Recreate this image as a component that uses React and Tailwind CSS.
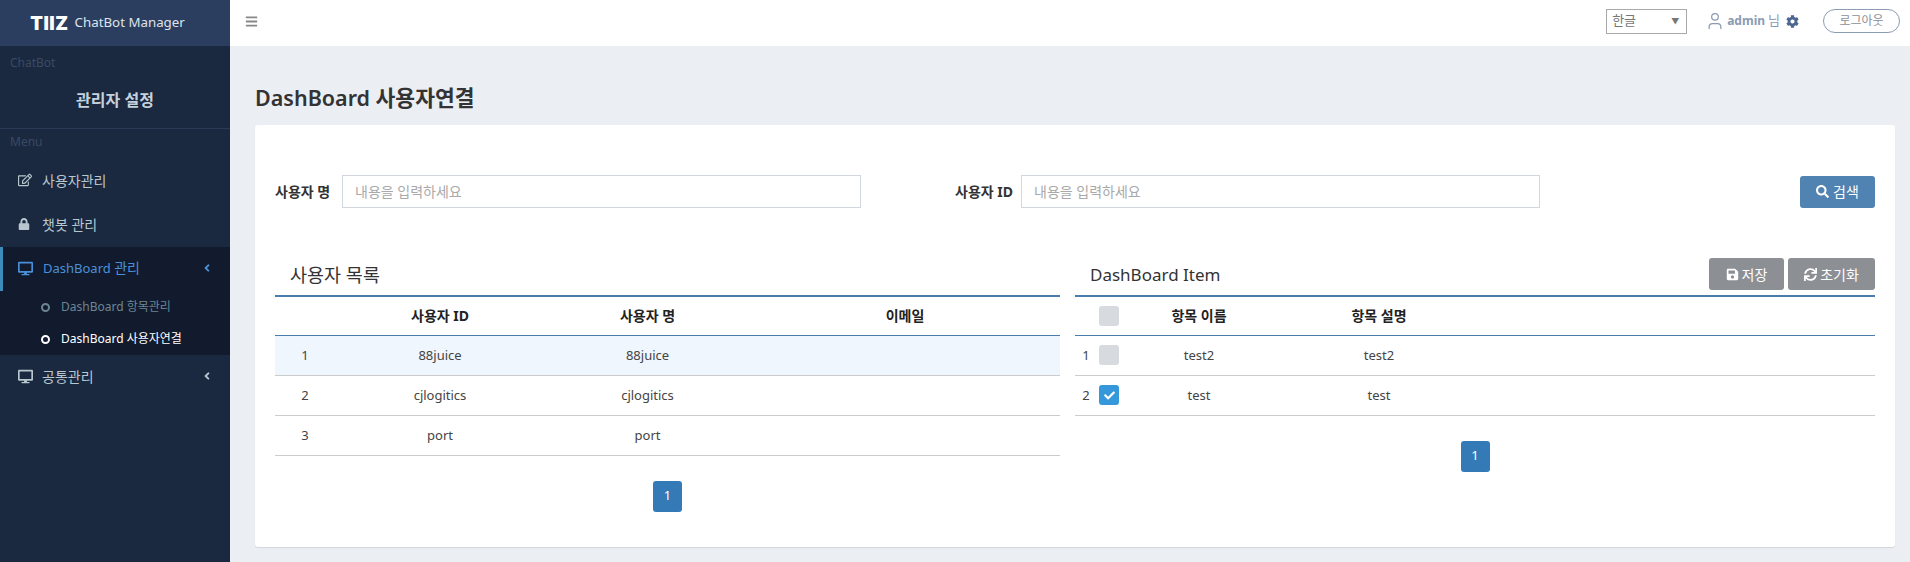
import { FaRegEdit, FaLock, FaDesktop, FaAngleLeft, FaBars, FaCog, FaSearch, FaSave, FaSync, FaCheck } from 'react-icons/fa'
import { User } from 'lucide-react'

const USERS = [
  { id: '88juice', name: '88juice' },
  { id: 'cjlogitics', name: 'cjlogitics' },
  { id: 'port', name: 'port' },
]

const ITEMS = [
  { name: 'test2', desc: 'test2', checked: false },
  { name: 'test', desc: 'test', checked: true },
]

function Sidebar() {
  return (
    <aside className="w-[230px] shrink-0 bg-[#1a2840] text-[14px] text-[#b8c7ce]">
      <div className="h-[46px] bg-[#2b3e60] flex items-center justify-center gap-[6px] text-white pr-[15px]">
        <span className="text-[18.5px] font-black leading-none tracking-[0.5px] font-['Inter']">TIIZ</span>
        <span className="text-[13.3px] text-[#dfe4ec]">ChatBot Manager</span>
      </div>
      <div className="h-[83px] border-b border-[#2b3b57] px-[10px]">
        <div className="pt-[8px] text-[12px] leading-[18px] text-[#3a4a63]">ChatBot</div>
        <div className="mt-[17px] text-center text-[16px] font-bold leading-[22px] text-[#c5d1dc]">관리자 설정</div>
      </div>
      <div className="px-[10px] pt-[4px] text-[12px] leading-[18px] text-[#3a4a63]">Menu</div>
      <nav className="mt-[8px]">
        <MenuItem icon={<FaRegEdit className="text-[14px]" />} label="사용자관리" />
        <MenuItem icon={<FaLock className="text-[12px]" />} label="챗봇 관리" />
        <div className="bg-[#121b2d]">
          <div className="h-[44px] flex items-center pl-[15px] pr-[17px] pb-[2px] border-l-[3px] border-[#3c8dbc] text-[#4a90d9]">
            <span className="w-[25px] flex"><FaDesktop className="text-[15px]" /></span>
            <span className="flex-1 text-[13px]">DashBoard <span className="text-[14px]">관리</span></span>
            <FaAngleLeft className="text-[12px]" />
          </div>
          <div className="text-[12px]">
            <SubItem label="DashBoard 항목관리" className="text-[#6d8593]" />
            <SubItem label="DashBoard 사용자연결" className="text-white" />
          </div>
        </div>
        <MenuItem
          icon={<FaDesktop className="text-[15px]" />}
          label="공통관리"
          right={<FaAngleLeft className="text-[12px]" />}
        />
      </nav>
    </aside>
  )
}

function MenuItem({ icon, label, right }) {
  return (
    <div className="h-[44px] flex items-center pl-[18px] pr-[17px] pb-[2px]">
      <span className="w-[24px] flex">{icon}</span>
      <span className="flex-1">{label}</span>
      {right}
    </div>
  )
}

function SubItem({ label, className }) {
  return (
    <div className={`h-[32px] flex items-center pl-[41px] ${className}`}>
      <span className="w-[9px] h-[9px] rounded-full border-2 border-current mr-[11px]"></span>
      <span>{label}</span>
    </div>
  )
}

function Topbar() {
  return (
    <header className="h-[46px] shrink-0 bg-white flex items-center pl-[15px] pr-[10px] pb-[4px] text-[13px]">
      <FaBars className="text-[13px] text-[#888]" />
      <div className="ml-auto w-[81px] h-[25px] border border-[#a9a9a9] flex items-center justify-between pl-[5px] pr-[7px] text-[#777]">
        <span>한글</span>
        <span className="text-[8px] text-[#777]">▼</span>
      </div>
      <User className="ml-[18px] w-[20px] h-[20px] text-[#8b9bb4]" strokeWidth={1.5} />
      <span className="ml-[2px] text-[12px] font-bold text-[#8b9bb4]">admin</span>
      <span className="ml-[3px] text-[#8b9bb4]">님</span>
      <FaCog className="ml-[6px] text-[13px] text-[#4e6690]" />
      <div className="ml-[24px] w-[77px] h-[24px] rounded-full border border-[#8b9bb4] flex items-center justify-center text-[12px] text-[#8b8f97]">
        로그아웃
      </div>
    </header>
  )
}

function SearchField({ label, className }) {
  return (
    <div className={`flex items-center ${className}`}>
      <span className="text-[14px] font-bold text-[#333] whitespace-nowrap">{label}</span>
      <input
        placeholder="내용을 입력하세요"
        className="ml-auto w-[519px] h-[33px] border border-[#d2d6de] px-[12px] text-[14px] placeholder:text-[#a9a9a9] outline-none"
      />
    </div>
  )
}

function Pager() {
  return (
    <div className="flex justify-center mt-[25px]">
      <div className="w-[29px] h-[31px] rounded-[3px] bg-[#337ab7] text-white text-[13px] flex items-center justify-center">1</div>
    </div>
  )
}

function ActionButton({ icon, label, className }) {
  return (
    <button className={`h-[32px] rounded-[3px] bg-[#8c9095] text-white text-[14px] flex items-center justify-center gap-[3px] ${className}`}>
      {icon}
      {label}
    </button>
  )
}

function UserTable() {
  return (
    <div className="w-[785px]">
      <div className="h-[40px] flex items-center pl-[15px] text-[18.5px] text-[#333]">사용자 목록</div>
      <table className="w-full table-fixed border-t-2 border-[#4a7cac] text-[13px] text-[#444]">
        <colgroup>
          <col className="w-[60px]" />
          <col className="w-[210px]" />
          <col className="w-[205px]" />
          <col />
        </colgroup>
        <thead>
          <tr className="h-[39px] border-b border-[#4a7cac] text-[14px] font-bold text-[#222]">
            <th></th>
            <th>사용자 ID</th>
            <th>사용자 명</th>
            <th>이메일</th>
          </tr>
        </thead>
        <tbody>
          {USERS.map((u, i) => (
            <tr key={u.id} className={`h-[40px] border-b border-[#ccc] text-center ${i === 0 ? 'bg-[#eff6fd]' : ''}`}>
              <td className="pt-[2px]">{i + 1}</td>
              <td className="pt-[2px]">{u.id}</td>
              <td className="pt-[2px]">{u.name}</td>
              <td></td>
            </tr>
          ))}
        </tbody>
      </table>
      <Pager />
    </div>
  )
}

function Checkbox({ checked }) {
  return (
    <span className={`w-[20px] h-[20px] rounded-[3px] flex items-center justify-center ${checked ? 'bg-[#3498db]' : 'bg-[#d7dbdf]'}`}>
      {checked && <FaCheck className="text-[11px] text-white" />}
    </span>
  )
}

function ItemTable() {
  return (
    <div className="w-[800px]">
      <div className="h-[40px] flex items-center pl-[15px]">
        <span className="text-[17px] text-[#333]">DashBoard Item</span>
        <ActionButton icon={<FaSave className="text-[13px]" />} label="저장" className="ml-auto w-[75px] mb-[2px]" />
        <ActionButton icon={<FaSync className="text-[13px]" />} label="초기화" className="ml-[4px] w-[87px] mb-[2px]" />
      </div>
      <table className="w-full table-fixed border-t-2 border-[#4a7cac] text-[13px] text-[#444]">
        <colgroup>
          <col className="w-[24px]" />
          <col className="w-[24px]" />
          <col className="w-[152px]" />
          <col className="w-[208px]" />
          <col />
        </colgroup>
        <thead>
          <tr className="h-[39px] border-b border-[#4a7cac] text-[14px] font-bold text-[#222]">
            <th></th>
            <th><Checkbox /></th>
            <th>항목 이름</th>
            <th>항목 설명</th>
            <th></th>
          </tr>
        </thead>
        <tbody>
          {ITEMS.map((item, i) => (
            <tr key={item.name} className="h-[40px] border-b border-[#ccc] text-center">
              <td className="pt-[2px] pr-[2px]">{i + 1}</td>
              <td><Checkbox checked={item.checked} /></td>
              <td className="pt-[2px]">{item.name}</td>
              <td className="pt-[2px]">{item.desc}</td>
              <td></td>
            </tr>
          ))}
        </tbody>
      </table>
      <Pager />
    </div>
  )
}

export default function App() {
  return (
    <div className="h-screen flex overflow-hidden bg-[#ebeef3] font-['Noto_Sans','Noto_Sans_CJK_KR',sans-serif]">
      <Sidebar />
      <div className="flex-1 flex flex-col min-w-0">
        <Topbar />
        <main className="flex-1 px-[25px] pr-[15px]">
          <h1 className="h-[79px] pt-[36px] text-[21.5px] font-semibold leading-[32px] text-[#333]">DashBoard 사용자연결</h1>
          <section className="h-[422px] rounded-[3px] bg-white shadow-[0_1px_1px_rgba(0,0,0,0.1)] px-[20px] pt-[50px]">
            <div className="flex items-center">
              <SearchField label="사용자 명" className="w-[586px]" />
              <SearchField label="사용자 ID" className="ml-[94px] w-[585px]" />
              <button className="ml-auto w-[75px] h-[32px] rounded-[3px] bg-[#5082b2] text-white text-[14px] flex items-center justify-center gap-[4px]">
                <FaSearch className="text-[13px]" />
                검색
              </button>
            </div>
            <div className="flex gap-[15px] mt-[47px]">
              <UserTable />
              <ItemTable />
            </div>
          </section>
        </main>
      </div>
    </div>
  )
}
